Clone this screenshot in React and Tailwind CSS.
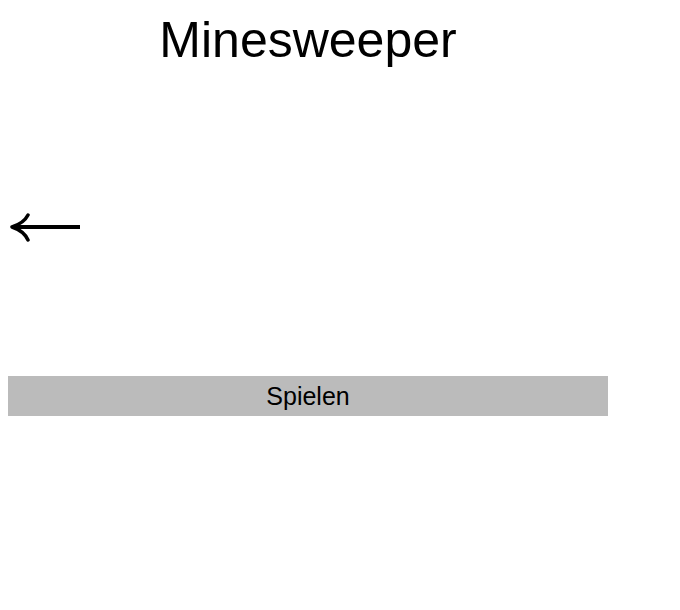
export default function App() {
  return (
    <div
      className="min-h-screen bg-white text-black p-2"
      style={{ fontFamily: '"Liberation Sans", Arial, sans-serif' }}
    >
      <div className="w-[600px] flex flex-col">
        <h1 className="text-[50px] leading-[58px] text-center mt-[3px]">
          Minesweeper
        </h1>

        <div className="mt-[143px] h-[30px] flex items-center">
          <svg width="74" height="30" viewBox="0 0 74 30" className="ml-[1px]">
            <path d="M4 15 H71" stroke="black" strokeWidth="4" fill="none" />
            <path
              d="M19 3 Q15 11 3 15 Q15 19 19 28"
              stroke="black"
              strokeWidth="3.5"
              fill="none"
              strokeLinecap="round"
              strokeLinejoin="round"
            />
          </svg>
        </div>

        <button className="mt-[134px] h-[40px] w-full bg-[#bbbbbb] text-[25px] leading-[40px] text-black">
          Spielen
        </button>
      </div>
    </div>
  );
}
